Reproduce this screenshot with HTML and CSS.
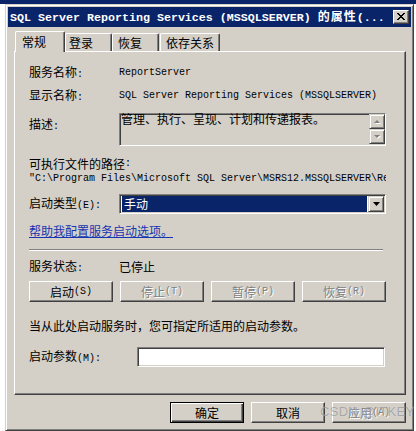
FILE: index.html
```html
<!DOCTYPE html>
<html lang="zh-CN">
<head>
<meta charset="utf-8">
<title>SQL Server Reporting Services (MSSQLSERVER) 的属性</title>
<link rel="stylesheet" href="styles.css">
</head>
<body>
<div class="window">
  <div class="titlebar">
    <span class="title">SQL Server Reporting Services (MSSQLSERVER) <span class="cn">的属性</span>(...</span>
    <span class="close"><svg width="8" height="7" viewBox="0 0 8 7"><path d="M0 0h2v1h1v1h2v-1h1v-1h2v1h-1v1h-1v1h-1v1h1v1h1v1h1v1h-2v-1h-1v-1h-2v1h-1v1h-2v-1h1v-1h1v-1h1v-1h-1v-1h-1v-1h-1z" fill="#000"/></svg></span>
  </div>
  <div class="tabs">
    <div class="tab active">常规</div>
    <div class="tab t2">登录</div>
    <div class="tab t3">恢复</div>
    <div class="tab t4">依存关系</div>
  </div>
  <div class="panel">
    <div class="row r1"><span class="label">服务名称<span class="m">:</span></span><span class="m">ReportServer</span></div>
    <div class="row r2"><span class="label">显示名称<span class="m">:</span></span><span class="m">SQL Server Reporting Services (MSSQLSERVER)</span></div>
    <div class="row drow">
      <span class="label dlabel">描述<span class="m">:</span></span>
      <div class="desc">
        <div class="desc-text">管理、执行、呈现、计划和传递报表。</div>
        <div class="scroll">
          <div class="sbtn"><svg width="7" height="4" viewBox="0 0 7 4"><path d="M4 1l3 3h-6z" fill="#fff"/><path d="M3 0l3 3h-6z" fill="#808080"/></svg></div>
          <div class="sbtn"><svg width="7" height="4" viewBox="0 0 7 4"><path d="M1 1h6l-3 3z" fill="#fff"/><path d="M0 0h6l-3 3z" fill="#808080"/></svg></div>
        </div>
      </div>
    </div>
    <div class="row exe">可执行文件的路径<span class="m">:</span></div>
    <div class="row path"><span class="m">"C:\Program Files\Microsoft SQL Server\MSRS12.MSSQLSERVER\Reporting Services\ReportServer\bin\ReportingServicesService.exe"</span></div>
    <div class="row crow">
      <span class="label">启动类型<span class="m">(E):</span></span>
      <div class="combo">
        <div class="sel">手动</div>
        <div class="dd"><svg width="7" height="4" viewBox="0 0 7 4"><path d="M0 0h7l-3.5 4z" fill="#000"/></svg></div>
      </div>
    </div>
    <div class="row lrow"><span class="link">帮助我配置服务启动选项。</span></div>
    <div class="sep"></div>
    <div class="row srow"><span class="label">服务状态<span class="m">:</span></span><span>已停止</span></div>
    <div class="brow">
      <div class="btn">启动<span class="m">(S)</span></div>
      <div class="btn dis">停止<span class="m">(T)</span></div>
      <div class="btn dis">暂停<span class="m">(P)</span></div>
      <div class="btn dis">恢复<span class="m">(R)</span></div>
    </div>
    <div class="row hint">当从此处启动服务时，您可指定所适用的启动参数。</div>
    <div class="row prow">
      <span class="label plabel">启动参数<span class="m">(M):</span></span>
      <div class="input"></div>
    </div>
  </div>
  <div class="footer">
    <div class="btn fbtn def">确定</div>
    <div class="btn fbtn">取消</div>
    <div class="btn fbtn dis">应用<span class="m">(A)</span></div>
  </div>
  <div class="watermark">CSDN @ITKEY</div>
</div>
</body>
</html>
```

FILE: styles.css
```css
* { box-sizing: border-box; }
html, body { margin: 0; padding: 0; }
body {
  width: 416px;
  height: 431px;
  overflow: hidden;
  background: linear-gradient(#0a246a 0, #0a246a 4px, #ffffff 4px);
  font-family: "Noto Sans CJK SC", sans-serif;
  font-size: 12px;
  color: #000;
}
.m { font-family: "Liberation Mono", monospace; font-size: 10px; }

.window {
  position: relative;
  width: 409px;
  height: 427px;
  margin: 4px 0 0 5px;
  background: #d4d0c8;
  border: 1px solid;
  border-color: #d4d0c8 #404040 #404040 #d4d0c8;
  box-shadow: inset 1px 1px #fff, inset -1px -1px #808080;
  padding: 2px;
}

.titlebar {
  height: 20px;
  background: #0a246a;
  display: flex;
  align-items: center;
  justify-content: space-between;
  padding: 0 2px 0 2px;
}
.title {
  color: #fff;
  font-family: "Liberation Mono", monospace;
  font-weight: bold;
  font-size: 11.67px;
  white-space: nowrap;
  line-height: 14px;
}
.title .cn { font-family: "Noto Sans CJK SC", sans-serif; font-size: 12px; letter-spacing: 1px; }
.close {
  width: 16px;
  height: 14px;
  background: #d4d0c8;
  border: 1px solid;
  border-color: #fff #404040 #404040 #fff;
  box-shadow: inset -1px -1px #808080;
  display: flex;
  align-items: center;
  justify-content: center;
  padding: 0 1px 1px 0;
}
.close svg { display: block; shape-rendering: crispEdges; }

.tabs {
  margin-top: 4px;
  height: 20px;
  display: flex;
  align-items: flex-end;
  padding-left: 7px;
}
.tab {
  height: 18px;
  background: #d4d0c8;
  border: 1px solid;
  border-bottom: 0;
  border-color: #fff #404040 #fff #fff;
  box-shadow: inset -1px 0 #808080;
  border-radius: 2px 2px 0 0;
  line-height: 18px;
  white-space: nowrap;
}
.tab.active {
  position: relative;
  z-index: 1;
  height: 21px;
  margin-bottom: -1px;
  width: 50px;
  padding-left: 6px;
  line-height: 20px;
}
.t2 { width: 47px; padding-left: 3px; }
.t3 { width: 47px; padding-left: 5px; }
.t4 { width: 60px; padding-left: 5px; margin-left: 1px; }

.panel {
  width: 392px;
  height: 344px;
  margin-left: 6px;
  border: 1px solid;
  border-color: #fff #404040 #404040 #fff;
  box-shadow: inset -1px -1px #808080;
  padding: 0 19px 0 14px;
}
.row {
  display: flex;
  align-items: center;
  height: 14px;
  line-height: 14px;
  white-space: nowrap;
}
.label { width: 90px; flex: none; }
.r1 { margin-top: 14px; }
.r2 { margin-top: 9px; }

.drow { margin-top: 10px; height: 33px; align-items: flex-start; }
.dlabel { margin-top: 4px; }
.desc {
  width: 267px;
  height: 33px;
  display: flex;
  background: #d4d0c8;
  border: 1px solid;
  border-color: #808080 #fff #fff #808080;
  box-shadow: inset 1px 1px #404040;
}
.desc-text { flex: 1; padding-left: 1px; line-height: 12px; margin-top: -1px; }
.scroll { width: 16px; display: flex; flex-direction: column; }
.sbtn {
  width: 16px;
  height: 15px;
  background: #d4d0c8;
  border: 1px solid;
  border-color: #d4d0c8 #404040 #404040 #d4d0c8;
  box-shadow: inset 1px 1px #fff, inset -1px -1px #808080;
  display: flex;
  align-items: center;
  justify-content: center;
}
.sbtn svg { display: block; }

.exe { margin-top: 11px; }
.path { margin-top: 1px; width: 357px; overflow: hidden; }

.crow { margin-top: 8px; height: 20px; }
.combo {
  width: 267px;
  height: 20px;
  display: flex;
  background: #fff;
  border: 1px solid;
  border-color: #808080 #fff #fff #808080;
  box-shadow: inset 1px 1px #404040, inset -1px -1px #d4d0c8;
  padding: 1px;
}
.sel {
  flex: 1;
  background: #0a246a;
  color: #fff;
  line-height: 16px;
  padding-left: 2px;
  margin: 0 1px 0 1px;
}
.dd {
  width: 16px;
  height: 16px;
  background: #d4d0c8;
  border: 1px solid;
  border-color: #d4d0c8 #404040 #404040 #d4d0c8;
  box-shadow: inset 1px 1px #fff, inset -1px -1px #808080;
  display: flex;
  align-items: center;
  justify-content: center;
}
.dd svg { display: block; }

.lrow { margin-top: 10px; }
.link { color: #1536b0; text-decoration: underline; }

.sep {
  margin-top: 11px;
  width: 354px;
  height: 2px;
  border-top: 1px solid #808080;
  border-bottom: 1px solid #fff;
}
.srow { margin-top: 9px; }

.brow { margin-top: 7px; display: flex; gap: 7px; }
.btn {
  width: 84px;
  height: 21px;
  background: #d4d0c8;
  border: 1px solid;
  border-color: #fff #404040 #404040 #fff;
  box-shadow: inset -1px -1px #808080;
  display: flex;
  align-items: center;
  justify-content: center;
  line-height: 14px;
  white-space: nowrap;
}
.btn.dis { color: #808080; text-shadow: 1px 1px #fff; }

.hint { margin-top: 17px; }
.prow { margin-top: 14px; height: 20px; }
.plabel { width: 108px; }
.input {
  flex: 1;
  height: 20px;
  margin-right: 1px;
  background: #fff;
  border: 1px solid;
  border-color: #808080 #fff #fff #808080;
  box-shadow: inset 1px 1px #404040, inset -1px -1px #d4d0c8;
}

.footer {
  margin-top: 7px;
  display: flex;
  justify-content: flex-end;
  gap: 7px;
  padding-right: 5px;
}
.fbtn { width: 74px; }
.fbtn.def {
  border: 1px solid #000;
  box-shadow: inset 1px 1px #fff, inset -1px -1px #404040, inset -2px -2px #808080;
}

.watermark {
  position: absolute;
  left: 314px;
  top: 399px;
  font-family: "Liberation Sans", sans-serif;
  font-size: 13px;
  color: rgba(110, 110, 110, 0.55);
  text-shadow: 0 0 1px rgba(255, 255, 255, 0.6);
  white-space: nowrap;
  letter-spacing: 0.3px;
}
```
